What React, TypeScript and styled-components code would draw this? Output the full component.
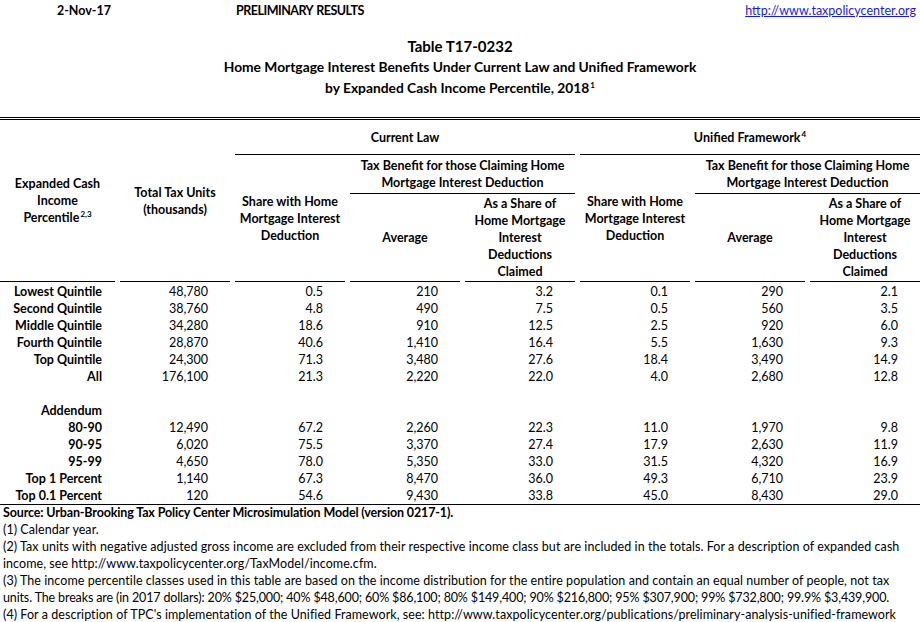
import React from "react";
import styled, { createGlobalStyle } from "styled-components";

const Global = createGlobalStyle`
  html, body { margin: 0; padding: 0; background: #fff; }
  body { font-family: Lato, "Open Sans", sans-serif; color: #000; }
`;

const Page = styled.div`
  width: 920px;
  font-size: 12.5px;
  line-height: 17px;
`;

const TopBar = styled.div`
  display: grid;
  grid-template-columns: repeat(8, 115px);
  height: 20px;
  align-items: center;
  font-weight: 700;
`;

const TopCell = styled.div<{ $col: string; $align: "left" | "right"; $tight?: boolean }>`
  grid-column: ${(p) => p.$col};
  text-align: ${(p) => p.$align};
  padding: ${(p) => (p.$align === "right" ? "0 4px 0 0" : "0 0 0 6px")};
  letter-spacing: ${(p) => (p.$tight ? "-0.5px" : "0")};
  word-spacing: ${(p) => (p.$tight ? "1px" : "0")};
  white-space: nowrap;
`;

const Link = styled.a`
  color: #1a1ae6;
  text-decoration: underline;
  font-weight: 400;
`;

const TitleBlock = styled.div`
  text-align: center;
  font-weight: 700;
  padding-top: 16px;
  margin-bottom: 19px;
`;

const Title = styled.div`
  font-size: 15px;
  line-height: 20px;
`;

const SubTitle = styled.div`
  font-size: 13.8px;
  line-height: 21px;
`;

const Sup = styled.sup`
  font-size: 8px;
  line-height: 0;
  vertical-align: 0;
  position: relative;
  top: -0.6em;
  margin-left: 1px;
`;

const DoubleRule = styled.div`
  height: 1px;
  border-top: 1px solid #000;
  border-bottom: 1px solid #000;
`;

const HeadGrid = styled.div`
  display: grid;
  grid-template-columns: repeat(8, 115px);
  grid-template-rows: 35px 39px 88px;
  font-weight: 700;
`;

const HeadCell = styled.div<{ $col: string; $row: string; $inset?: boolean; $rule?: boolean }>`
  grid-column: ${(p) => p.$col};
  grid-row: ${(p) => p.$row};
  margin-left: ${(p) => (p.$inset ? "5px" : "0")};
  border-bottom: ${(p) => (p.$rule ? "1px solid #000" : "none")};
  display: flex;
  align-items: center;
  justify-content: center;
  text-align: center;
`;

const DataGrid = styled.div`
  display: grid;
  grid-template-columns: repeat(8, 115px);
  grid-auto-rows: 17px;
  padding-top: 1px;
  border-bottom: 1px solid #000;
`;

const DataCell = styled.div<{ $label?: boolean }>`
  text-align: right;
  padding-right: ${(p) => (p.$label ? "13px" : "22px")};
  font-weight: ${(p) => (p.$label ? 700 : 400)};
  white-space: nowrap;
`;

const Notes = styled.div`
  padding-left: 3px;
  margin-top: -1px;
`;

const Note = styled.div<{ $bold?: boolean; $ls?: number }>`
  font-weight: ${(p) => (p.$bold ? 700 : 400)};
  letter-spacing: ${(p) => (p.$ls ?? (p.$bold ? -0.14 : 0.06))}px;
  white-space: nowrap;
`;

const rows: string[][] = [
  ["Lowest Quintile", "48,780", "0.5", "210", "3.2", "0.1", "290", "2.1"],
  ["Second Quintile", "38,760", "4.8", "490", "7.5", "0.5", "560", "3.5"],
  ["Middle Quintile", "34,280", "18.6", "910", "12.5", "2.5", "920", "6.0"],
  ["Fourth Quintile", "28,870", "40.6", "1,410", "16.4", "5.5", "1,630", "9.3"],
  ["Top Quintile", "24,300", "71.3", "3,480", "27.6", "18.4", "3,490", "14.9"],
  ["All", "176,100", "21.3", "2,220", "22.0", "4.0", "2,680", "12.8"],
  ["", "", "", "", "", "", "", ""],
  ["Addendum", "", "", "", "", "", "", ""],
  ["80-90", "12,490", "67.2", "2,260", "22.3", "11.0", "1,970", "9.8"],
  ["90-95", "6,020", "75.5", "3,370", "27.4", "17.9", "2,630", "11.9"],
  ["95-99", "4,650", "78.0", "5,350", "33.0", "31.5", "4,320", "16.9"],
  ["Top 1 Percent", "1,140", "67.3", "8,470", "36.0", "49.3", "6,710", "23.9"],
  ["Top 0.1 Percent", "120", "54.6", "9,430", "33.8", "45.0", "8,430", "29.0"],
];

export default function App() {
  return (
    <Page>
      <Global />
      <TopBar>
        <TopCell $col="1" $align="right">2-Nov-17</TopCell>
        <TopCell $col="3 / 6" $align="left" $tight>
          PRELIMINARY RESULTS
        </TopCell>
        <TopCell $col="7 / 9" $align="right">
          <Link href="#">http://www.taxpolicycenter.org</Link>
        </TopCell>
      </TopBar>
      <TitleBlock>
        <Title>Table T17-0232</Title>
        <SubTitle>Home Mortgage Interest Benefits Under Current Law and Unified Framework</SubTitle>
        <SubTitle>
          by Expanded Cash Income Percentile, 2018<Sup>1</Sup>
        </SubTitle>
      </TitleBlock>
      <DoubleRule />
      <HeadGrid>
        <HeadCell $col="1" $row="1 / 4" $rule>
          <div>
            Expanded Cash
            <br />
            Income
            <br />
            Percentile<Sup>2,3</Sup>
          </div>
        </HeadCell>
        <HeadCell $col="2" $row="1 / 4" $inset $rule>
          <div>
            Total Tax Units
            <br />
            (thousands)
          </div>
        </HeadCell>
        <HeadCell $col="3 / 6" $row="1" $inset $rule>
          Current Law
        </HeadCell>
        <HeadCell $col="3" $row="2 / 4" $inset $rule>
          <div>
            Share with Home
            <br />
            Mortgage Interest
            <br />
            Deduction
          </div>
        </HeadCell>
        <HeadCell $col="4 / 6" $row="2" $inset $rule>
          <div>
            Tax Benefit for those Claiming Home
            <br />
            Mortgage Interest Deduction
          </div>
        </HeadCell>
        <HeadCell $col="4" $row="3" $inset $rule>
          Average
        </HeadCell>
        <HeadCell $col="5" $row="3" $inset $rule>
          <div>
            As a Share of
            <br />
            Home Mortgage
            <br />
            Interest
            <br />
            Deductions
            <br />
            Claimed
          </div>
        </HeadCell>
        <HeadCell $col="6 / 9" $row="1" $inset $rule>
          <div>
            Unified Framework<Sup>4</Sup>
          </div>
        </HeadCell>
        <HeadCell $col="6" $row="2 / 4" $inset $rule>
          <div>
            Share with Home
            <br />
            Mortgage Interest
            <br />
            Deduction
          </div>
        </HeadCell>
        <HeadCell $col="7 / 9" $row="2" $inset $rule>
          <div>
            Tax Benefit for those Claiming Home
            <br />
            Mortgage Interest Deduction
          </div>
        </HeadCell>
        <HeadCell $col="7" $row="3" $inset $rule>
          Average
        </HeadCell>
        <HeadCell $col="8" $row="3" $inset $rule>
          <div>
            As a Share of
            <br />
            Home Mortgage
            <br />
            Interest
            <br />
            Deductions
            <br />
            Claimed
          </div>
        </HeadCell>
      </HeadGrid>
      <DataGrid>
        {rows.map((r, i) =>
          r.map((c, j) => (
            <DataCell key={`${i}-${j}`} $label={j === 0}>
              {c}
            </DataCell>
          ))
        )}
      </DataGrid>
      <Notes>
        <Note $bold>Source: Urban-Brooking Tax Policy Center Microsimulation Model (version 0217-1).</Note>
        <Note>(1) Calendar year.</Note>
        <Note $ls={0.07}>
          (2) Tax units with negative adjusted gross income are excluded from their respective income class but are included in the totals. For a description of expanded cash
        </Note>
        <Note>income, see http://www.taxpolicycenter.org/TaxModel/income.cfm.</Note>
        <Note>
          (3) The income percentile classes used in this table are based on the income distribution for the entire population and contain an equal number of people, not tax
        </Note>
        <Note $ls={-0.14}>
          units. The breaks are (in 2017 dollars): 20% $25,000; 40% $48,600; 60% $86,100; 80% $149,400; 90% $216,800; 95% $307,900; 99% $732,800; 99.9% $3,439,900.
        </Note>
        <Note>
          (4) For a description of TPC's implementation of the Unified Framework, see:
          http://www.taxpolicycenter.org/publications/preliminary-analysis-unified-framework
        </Note>
      </Notes>
    </Page>
  );
}
